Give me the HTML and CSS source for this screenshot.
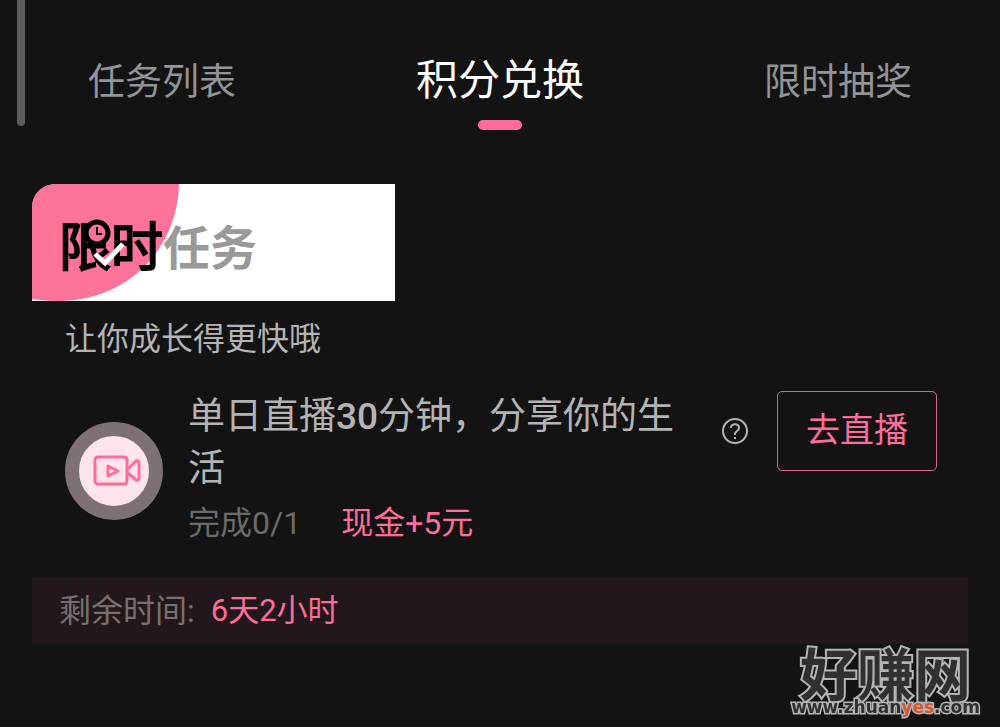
FILE: index.html
```html
<!DOCTYPE html>
<html lang="zh-CN">
<head>
    <meta charset="UTF-8">
    <meta name="viewport" content="width=device-width, initial-scale=1.0">
    <title>积分兑换</title>
    <link rel="stylesheet" href="styles.css">
</head>
<body>
    <div class="scroll-thumb"></div>

    <nav class="tabs">
        <button class="tab" type="button">任务列表</button>
        <button class="tab active" type="button">积分兑换</button>
        <button class="tab" type="button">限时抽奖</button>
    </nav>

    <main class="card">
        <h2 class="banner">
            <svg class="banner-bg" viewBox="0 0 363 117" aria-hidden="true">
                <path d="M0 24C0 9 10 0 26 0H147C146 62 98 117 26 117Q12 117 0 115Z" fill="#fd7299"/>
            </svg>
            <span class="banner-strong">限时</span><span class="banner-light">任务</span>
            <svg class="banner-marks" viewBox="0 0 363 117" aria-hidden="true">
                <circle cx="65" cy="49" r="11" fill="#fd7299" stroke="#000" stroke-width="5"/>
                <path d="M65 43V50H70" fill="none" stroke="#000" stroke-width="2"/>
                <path d="M63 70L73 79L91 60" fill="none" stroke="#fff" stroke-width="5"/>
            </svg>
        </h2>
        <p class="subtitle">让你成长得更快哦</p>

        <section class="task">
            <div class="task-icon">
                <svg viewBox="0 0 48 32" aria-hidden="true">
                    <rect x="2" y="2" width="32" height="27" rx="3"/>
                    <path d="M35 14L43 6Q46 5 46 8V23Q46 26 43 25L35 18"/>
                    <path class="play" d="M15 11V21L25 16Z"/>
                </svg>
            </div>
            <div class="task-body">
                <h3 class="task-title">单日直播<b>30</b>分钟，分享你的生活</h3>
                <div class="task-meta">
                    <span class="progress">完成0/1</span>
                    <span class="reward">现金+5元</span>
                </div>
            </div>
            <div class="task-actions">
                <button class="help" type="button" aria-label="说明">
                    <svg viewBox="0 0 28 28" aria-hidden="true">
                        <circle cx="14" cy="14" r="12"/>
                        <path d="M10 11C10 6 18 6 18 11C18 14 14 14 14 17V18M14 20V22"/>
                    </svg>
                </button>
                <button class="go-btn" type="button">去直播</button>
            </div>
        </section>

        <div class="countdown">
            <span>剩余时间:</span>
            <span class="time">6天2小时</span>
        </div>
    </main>

    <div class="watermark">
        <div class="mark-name">好赚网</div>
        <div class="mark-url">www.zhuan<span>yes</span>.com</div>
    </div>
</body>
</html>
```

FILE: styles.css
```css
/* Base Styles */
* {
    box-sizing: border-box;
}

body {
    margin: 0;
    min-height: 100vh;
    padding: 51px 32px 0;
    background: #131313;
    color: #b4b4b4;
    font-family: Roboto, "Noto Sans CJK SC", sans-serif;
    font-size: 32px;
}

h2, h3, p {
    margin: 0;
    font-weight: 400;
}

button {
    padding: 0;
    border: none;
    background: none;
    color: inherit;
    font-family: inherit;
    cursor: pointer;
}

.scroll-thumb {
    position: fixed;
    top: 0;
    left: 17px;
    width: 8px;
    height: 126px;
    border-radius: 0 0 4px 4px;
    background: #5e5e5e;
}

/* Tabs */
.tabs {
    display: flex;
    justify-content: space-between;
    align-items: flex-start;
    padding: 0 56px;
}

.tab {
    color: #929497;
    font-size: 37px;
    line-height: 64px;
}

.tab.active {
    color: #fff;
    font-size: 42px;
    line-height: 60px;
}

.tab.active::after {
    content: "";
    display: block;
    width: 44px;
    height: 10px;
    margin: 9px auto 0;
    border-radius: 5px;
    background: #ff6b9b;
}

/* Card */
.card {
    margin-top: 54px;
}

.banner {
    position: relative;
    display: flex;
    align-items: center;
    width: 363px;
    height: 117px;
    padding: 12px 0 0 27px;
    border-top-left-radius: 24px;
    background: #fff;
    line-height: 60px;
}

.banner-bg,
.banner-marks {
    position: absolute;
    top: 0;
    left: 0;
    width: 100%;
    height: 100%;
}

.banner-strong,
.banner-light {
    position: relative;
    font-weight: 700;
}

.banner-strong {
    color: #000;
    font-size: 52px;
    font-weight: 400;
    -webkit-text-stroke: 2px #000;
}

.banner-light {
    color: #999;
    font-size: 47px;
}

.subtitle {
    margin-top: 14px;
    padding: 0 33px;
    line-height: 48px;
}

/* Task Row */
.task {
    display: flex;
    align-items: flex-start;
    gap: 25px;
    margin-top: 28px;
    padding: 0 31px 0 33px;
}

.task-icon {
    display: flex;
    align-items: center;
    justify-content: center;
    align-self: center;
    flex: none;
    width: 98px;
    height: 98px;
    margin-top: 5px;
    padding-left: 6px;
    border: 14px solid #7e7175;
    border-radius: 50%;
    background: #ffe4ec;
}

.task-icon svg {
    width: 48px;
    height: 32px;
    fill: none;
    stroke: #fd6d9a;
    stroke-width: 3;
    stroke-linejoin: round;
}

.task-body {
    flex: 1;
    min-width: 0;
}

.task-title {
    font-size: 37px;
    line-height: 52px;
}

.task-title b {
    font-weight: 500;
}

.task-meta {
    display: flex;
    gap: 40px;
    margin-top: 6px;
    line-height: 44px;
}

.progress {
    color: #6b6b6b;
}

.reward,
.time {
    color: #fc6d99;
}

.task-actions {
    display: flex;
    align-items: center;
    gap: 28px;
}

.help,
.help svg {
    display: block;
    width: 28px;
    height: 28px;
}

.help svg {
    fill: none;
    stroke: #b4b4b4;
    stroke-width: 2;
}

.go-btn {
    width: 160px;
    height: 80px;
    padding-bottom: 8px;
    border: 1px solid #d9648a;
    border-radius: 5px;
    color: #fc6d99;
    font-size: 34px;
}

/* Remaining Time */
.countdown {
    display: flex;
    gap: 16px;
    margin-top: 33px;
    padding: 0 27px;
    background: #22181b;
    color: #77706f;
    line-height: 66px;
}

.time {
    font-size: 31px;
}

/* Watermark */
.watermark {
    position: fixed;
    right: 20px;
    bottom: 12px;
    color: #303030;
    font-weight: 700;
    text-align: center;
    -webkit-text-stroke: 4px #b5b5b5;
    paint-order: stroke fill;
}

.mark-name {
    font-size: 57px;
    line-height: 44px;
}

.mark-url {
    font-family: "DejaVu Sans", sans-serif;
    font-size: 17px;
    line-height: 16px;
    -webkit-text-stroke-width: 3px;
}

.mark-url span {
    color: #d9532c;
}
```
